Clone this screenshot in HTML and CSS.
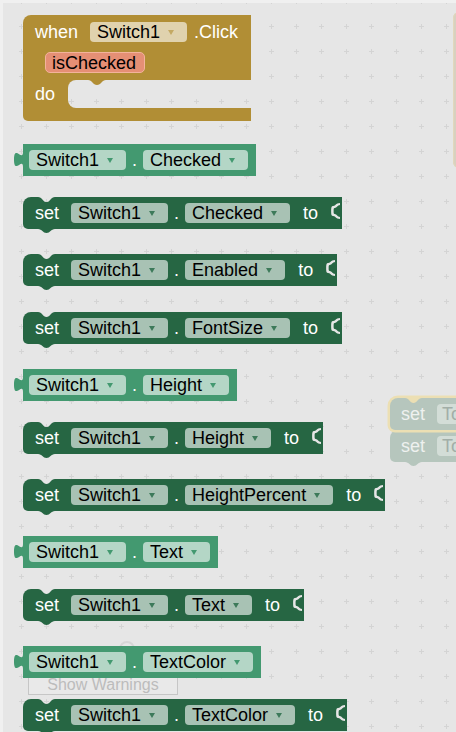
FILE: index.html
```html
<!DOCTYPE html>
<html>
<head>
<meta charset="utf-8">
<title>Blocks</title>
<link rel="stylesheet" href="styles.css">
</head>
<body>
<div class="workspace">
  <div class="ghost-edge"></div>
  <div class="warn-ring"></div>
  <div class="warn-btn">Show Warnings</div>

  <div class="blocks">
    <div class="event">
      <div class="ev-top">
        <div class="ev-row">
          <span class="lbl">when</span>
          <span class="dd dd-ev">Switch1<i class="arr"></i></span>
          <span class="lbl ev-click">.Click</span>
        </div>
        <div class="ev-row ev-row2"><span class="param">isChecked</span></div>
      </div>
      <div class="ev-mid">
        <div class="ev-do"><span class="lbl">do</span></div>
        <div class="ev-slot"><i class="slot-tab"></i></div>
      </div>
      <div class="ev-bot"></div>
    </div>

    <div class="blk get after-ev"><i class="out-tab"></i><span class="dd">Switch1<i class="arr"></i></span><span class="lbl dot">.</span><span class="dd">Checked<i class="arr"></i></span></div>

    <div class="blk set"><span class="lbl kw">set</span><span class="dd">Switch1<i class="arr"></i></span><span class="lbl dot">.</span><span class="dd">Checked<i class="arr"></i></span><span class="lbl to">to</span><i class="sock"></i></div>

    <div class="blk set"><span class="lbl kw">set</span><span class="dd">Switch1<i class="arr"></i></span><span class="lbl dot">.</span><span class="dd">Enabled<i class="arr"></i></span><span class="lbl to">to</span><i class="sock"></i></div>

    <div class="blk set gap26"><span class="lbl kw">set</span><span class="dd">Switch1<i class="arr"></i></span><span class="lbl dot">.</span><span class="dd">FontSize<i class="arr"></i></span><span class="lbl to">to</span><i class="sock"></i></div>

    <div class="blk get"><i class="out-tab"></i><span class="dd">Switch1<i class="arr"></i></span><span class="lbl dot">.</span><span class="dd">Height<i class="arr"></i></span></div>

    <div class="blk set"><span class="lbl kw">set</span><span class="dd">Switch1<i class="arr"></i></span><span class="lbl dot">.</span><span class="dd">Height<i class="arr"></i></span><span class="lbl to">to</span><i class="sock"></i></div>

    <div class="blk set"><span class="lbl kw">set</span><span class="dd">Switch1<i class="arr"></i></span><span class="lbl dot">.</span><span class="dd">HeightPercent<i class="arr"></i></span><span class="lbl to">to</span><i class="sock"></i></div>

    <div class="blk get"><i class="out-tab"></i><span class="dd">Switch1<i class="arr"></i></span><span class="lbl dot">.</span><span class="dd">Text<i class="arr"></i></span></div>

    <div class="blk set"><span class="lbl kw">set</span><span class="dd">Switch1<i class="arr"></i></span><span class="lbl dot">.</span><span class="dd">Text<i class="arr"></i></span><span class="lbl to">to</span><i class="sock"></i></div>

    <div class="blk get"><i class="out-tab"></i><span class="dd">Switch1<i class="arr"></i></span><span class="lbl dot">.</span><span class="dd">TextColor<i class="arr"></i></span></div>

    <div class="blk set"><span class="lbl kw">set</span><span class="dd">Switch1<i class="arr"></i></span><span class="lbl dot">.</span><span class="dd">TextColor<i class="arr"></i></span><span class="lbl to">to</span><i class="sock"></i></div>
  </div>

  <div class="ghost">
    <div class="gblk gsel"><span class="gkw">set</span><span class="gdd">To</span></div>
    <div class="gblk glast"><span class="gkw">set</span><span class="gdd">To</span></div>
  </div>
</div>
</body>
</html>
```

FILE: styles.css
```css
:root {
  --ws: #e6e6e6 url("data:image/svg+xml;utf8,<svg xmlns='http://www.w3.org/2000/svg' width='25' height='25'><rect x='10' y='12' width='5' height='1' fill='%23d4d4d4'/><rect x='12' y='10' width='1' height='5' fill='%23d4d4d4'/></svg>") 9px 14px / 25px 25px repeat fixed;
  --ev: #b18e35;
  --get: #439970;
  --set: #266643;
}

* { box-sizing: border-box; }

html, body {
  margin: 0;
  padding: 0;
}

body {
  width: 456px;
  height: 732px;
  overflow: hidden;
  font-family: "Liberation Sans", Arial, sans-serif;
  background: #e6e6e6;
}

.workspace {
  position: relative;
  width: 456px;
  height: 732px;
  overflow: hidden;
  background: var(--ws);
  border-top: 3px solid #f0f0f0;
  border-left: 3px solid #f0f0f0;
  padding: 12px 0 0 20px;
}

.blocks {
  position: relative;
  z-index: 2;
  display: flex;
  flex-direction: column;
  align-items: flex-start;
}

/* ---------- labels & fields ---------- */
.lbl {
  color: #fff;
  font-size: 18px;
  line-height: 20px;
  white-space: nowrap;
}

.dd {
  display: inline-flex;
  align-items: center;
  height: 20px;
  padding: 0 13px 0 7px;
  border-radius: 4px;
  font-size: 18px;
  line-height: 20px;
  color: #000;
  white-space: nowrap;
}

.arr {
  display: inline-block;
  width: 0;
  height: 0;
  margin-left: 8px;
  border-left: 3px solid transparent;
  border-right: 3px solid transparent;
  border-top: 5px solid var(--get);
}

.dot { margin: 0 6px; }

/* ---------- event block ---------- */
.event {
  width: 228px;
  display: flex;
  flex-direction: column;
}

.ev-top {
  background: var(--ev);
  border-radius: 8px 0 0 0;
  padding: 7px 12px 7px 12px;
  height: 65px;
}

.ev-row {
  display: flex;
  align-items: center;
  height: 20px;
}

.ev-row .dd { margin-left: 12px; }

.dd-ev { background: #e0d2ae; }
.dd-ev .arr { border-top-color: #c4a963; }

.ev-click { margin-left: 7px; }

.ev-row2 {
  margin-top: 10px;
  height: 21px;
}

.param {
  display: inline-flex;
  align-items: center;
  height: 21px;
  margin-left: 10px;
  padding: 0 8px 0 6px;
  border: 1.5px solid #f3b39c;
  border-radius: 5px;
  background: #e58f75;
  color: #000;
  font-size: 18px;
  line-height: 18px;
}

.ev-mid {
  display: flex;
  height: 28px;
  background: var(--ev);
}

.ev-do {
  width: 45px;
  display: flex;
  align-items: center;
  padding-left: 12px;
}

.ev-slot {
  position: relative;
  flex: 1;
  background: var(--ws);
  border-radius: 8px 0 0 8px;
}

.slot-tab {
  position: absolute;
  left: 20px;
  top: 0;
  width: 18px;
  height: 5px;
  background: var(--ev);
  clip-path: path('M0,0 C4,0 5,5 9,5 C13,5 14,0 18,0 Z');
}

.ev-bot {
  height: 13px;
  background: var(--ev);
  border-radius: 0 0 0 5px;
}

/* ---------- value / statement blocks ---------- */
.blk {
  position: relative;
  display: inline-flex;
  align-items: center;
  height: 32px;
}

.get {
  background: var(--get);
  padding: 0 8px 0 6px;
  margin-top: 25px;
}
.get .dd { background: #b4d6c6; }
.after-ev { margin-top: 23px; }

.out-tab {
  position: absolute;
  left: -9px;
  top: 3px;
  width: 9px;
  height: 20px;
  background: var(--get);
  clip-path: path('M9,5 C9,15 0,-3 0,12.5 C0,28 9,10 9,20 Z');
}

.set {
  background: var(--set);
  padding: 0 24px 0 12px;
  border-radius: 8px 0 0 5px;
  margin-top: 25px;
}
.get + .set { margin-top: 21px; }
.set.gap26 { margin-top: 26px; }

.set .dd { background: #a8c2b4; }
.set .arr { border-top-color: #3d7a5a; }
.kw { margin-right: 12px; }
.to { margin-left: 13px; }

.set::before {
  content: "";
  position: absolute;
  left: 15px;
  top: 0;
  width: 17px;
  height: 5px;
  background: var(--ws);
  clip-path: path('M0,0 C4,0 5,5 8.5,5 C12,5 13,0 17,0 Z');
}

.set::after {
  content: "";
  position: absolute;
  left: 15px;
  bottom: -4px;
  width: 17px;
  height: 4px;
  background: var(--set);
  clip-path: path('M0,0 C4,0 5,4 8.5,4 C12,4 13,0 17,0 Z');
}

/* empty value socket: a thin bracket-shaped gap in the right edge */
.sock {
  position: absolute;
  right: 2px;
  top: 5px;
  width: 9px;
  height: 18px;
  background: #e6e6e6;
  clip-path: path(evenodd, 'M9,1 C4,1 5,4 2,4 C0,4 0,6 0,9 C0,12 0,14 2,14 C5,14 4,17 9,17 L9,15 C6,15 6,12 3.5,12 C2.5,12 2.5,11 2.5,9 C2.5,7 2.5,6 3.5,6 C6,6 6,3 9,3 Z');
}

/* ---------- faded / background items ---------- */
.ghost-edge {
  position: absolute;
  left: 450px;
  top: 9px;
  width: 20px;
  height: 156px;
  background: #d8d1c0;
  border-radius: 6px 0 0 6px;
  box-shadow: inset 1px 0 0 #e2d8bc;
}

.warn-btn {
  position: absolute;
  z-index: 1;
  left: 25px;
  top: 671px;
  width: 150px;
  height: 21px;
  border: 1px solid #c6c6c6;
  background: #e9e9e9;
  color: #bcbcbc;
  font-size: 16px;
  line-height: 19px;
  text-align: center;
  white-space: nowrap;
}

.warn-ring {
  position: absolute;
  z-index: 1;
  left: 116px;
  top: 638px;
  width: 16px;
  height: 16px;
  border: 2px solid #d6d6d6;
  border-radius: 50%;
}

.ghost {
  position: absolute;
  z-index: 3;
  left: 387px;
  top: 395px;
  display: flex;
  flex-direction: column;
}

.gblk {
  position: relative;
  display: flex;
  align-items: center;
  width: 69px;
  height: 32px;
  padding-left: 11px;
  background: #b6c6bd;
  border-radius: 8px 0 0 5px;
  overflow: visible;
}

.gsel {
  z-index: 2;
  box-shadow: 0 0 0 2.5px #ecdfb3;
}

.gblk::before {
  content: "";
  position: absolute;
  left: 15px;
  top: 0;
  width: 17px;
  height: 5px;
  background: #e6e6e6;
  clip-path: path('M0,0 C4,0 5,5 8.5,5 C12,5 13,0 17,0 Z');
}

.gsel::before { background: #ecdfb3; }

.glast::before { display: none; }

.glast::after {
  content: "";
  position: absolute;
  left: 15px;
  bottom: -4px;
  width: 17px;
  height: 4px;
  background: #b6c6bd;
  clip-path: path('M0,0 C4,0 5,4 8.5,4 C12,4 13,0 17,0 Z');
}

.gkw {
  color: #eef1ef;
  font-size: 18px;
  line-height: 20px;
}

.gdd {
  margin-left: 12px;
  width: 28px;
  height: 20px;
  padding: 0 0 0 5px;
  border-radius: 4px 0 0 4px;
  background: #d3ddd7;
  color: #a2aea7;
  font-size: 18px;
  line-height: 20px;
  white-space: nowrap;
  overflow: hidden;
}
```
